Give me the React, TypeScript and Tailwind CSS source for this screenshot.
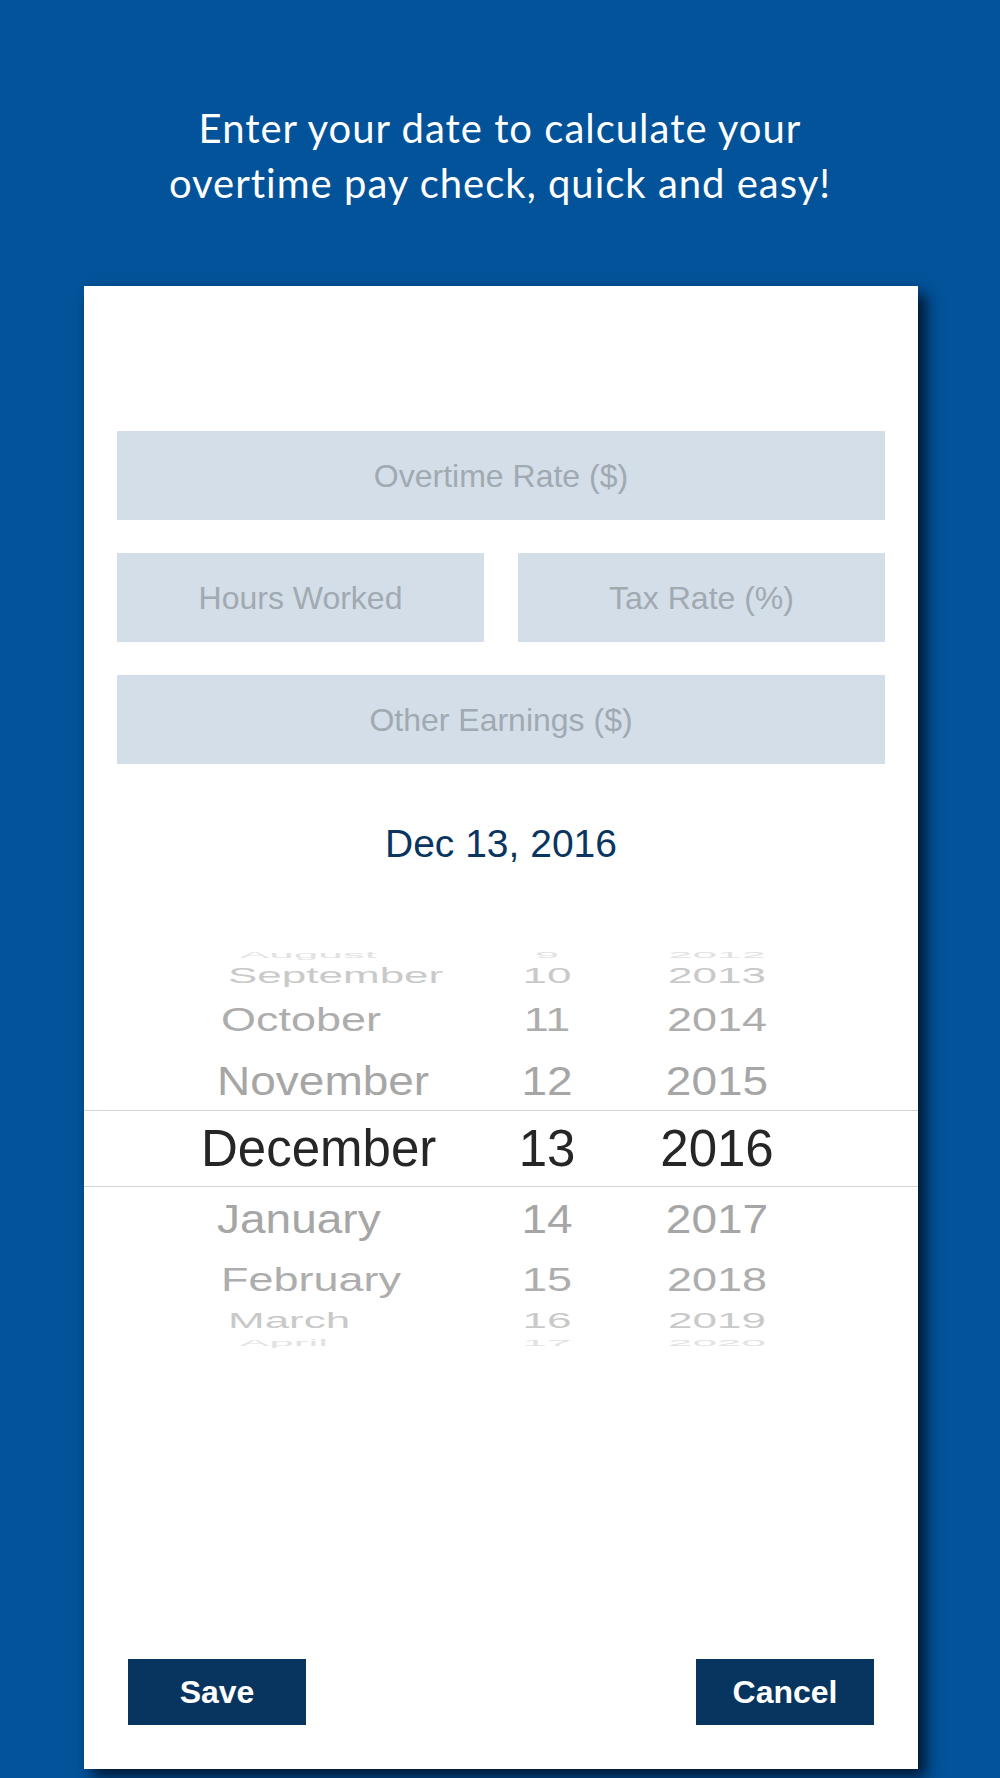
import React from 'react';

interface PickerRow {
  month: string;
  day: string;
  year: string;
  height: string;
  scale: string;
  color: string;
  size: string;
  pad: string;
  selected?: boolean;
}

const rows: PickerRow[] = [
  { month: 'August', day: '9', year: '2012', height: 'h-[21px]', scale: 'scale-y-[0.22]', color: 'text-[#e2e2e2]', size: 'text-[44px]', pad: 'pl-[156px]' },
  { month: 'September', day: '10', year: '2013', height: 'h-[22px]', scale: 'scale-y-[0.48]', color: 'text-[#c9c9c9]', size: 'text-[44px]', pad: 'pl-[144px]' },
  { month: 'October', day: '11', year: '2014', height: 'h-[64px]', scale: 'scale-y-[0.73]', color: 'text-[#adadad]', size: 'text-[45px]', pad: 'pl-[137px]' },
  { month: 'November', day: '12', year: '2015', height: 'h-[59px]', scale: 'scale-y-[0.88]', color: 'text-[#a6a6a6]', size: 'text-[46px]', pad: 'pl-[133px]' },
  { month: 'December', day: '13', year: '2016', height: 'h-[77px]', scale: 'scale-y-100', color: 'text-[#262626]', size: 'text-[51px]', pad: 'pl-[117px]', selected: true },
  { month: 'January', day: '14', year: '2017', height: 'h-[64px]', scale: 'scale-y-[0.9]', color: 'text-[#a6a6a6]', size: 'text-[46px]', pad: 'pl-[133px]' },
  { month: 'February', day: '15', year: '2018', height: 'h-[56px]', scale: 'scale-y-[0.74]', color: 'text-[#adadad]', size: 'text-[45px]', pad: 'pl-[137px]' },
  { month: 'March', day: '16', year: '2019', height: 'h-[28px]', scale: 'scale-y-[0.48]', color: 'text-[#c9c9c9]', size: 'text-[44px]', pad: 'pl-[144px]' },
  { month: 'April', day: '17', year: '2020', height: 'h-[16px]', scale: 'scale-y-[0.22]', color: 'text-[#e2e2e2]', size: 'text-[44px]', pad: 'pl-[156px]' },
];

const sans = "font-['Liberation_Sans',Arial,sans-serif]";

function Field({ label, className = '' }: { label: string; className?: string }) {
  return (
    <div className={`flex h-[89px] shrink-0 items-center justify-center bg-[#d4dee8] text-[32px] text-[#a1a9b1] ${sans} ${className}`}>
      {label}
    </div>
  );
}

export default function App() {
  return (
    <div className="h-[1778px] w-full overflow-hidden bg-[#02539a]">
      {/* heading */}
      <div className="pt-[101px] text-center font-['Lato','Open_Sans',sans-serif] text-[40px] leading-[55px] tracking-[1px] text-white">
        <p>Enter your date to calculate your</p>
        <p>overtime pay check, quick and easy!</p>
      </div>

      {/* card */}
      <div className="ml-[84px] mt-[75px] flex h-[1483px] w-[834px] flex-col bg-white shadow-[8px_8px_14px_rgba(0,12,30,0.85)]">
        <div className="flex flex-col gap-[33px] px-[33px] pt-[145px]">
          <Field label="Overtime Rate ($)" />
          <div className="flex gap-[34px]">
            <Field label="Hours Worked" className="flex-1" />
            <Field label="Tax Rate (%)" className="flex-1" />
          </div>
          <Field label="Other Earnings ($)" />
        </div>

        <p className={`mt-[60px] text-center text-[39px] leading-[39px] text-[#0a3560] ${sans}`}>Dec 13, 2016</p>

        {/* date picker */}
        <div className={`mt-[81px] flex flex-col overflow-hidden ${sans}`}>
          {rows.map((r) => (
            <div
              key={r.month}
              className={`flex items-center overflow-hidden ${r.height} ${r.selected ? 'border-y border-[#d4d4d4]' : ''}`}
            >
              <div className={`flex w-full items-center leading-none ${r.scale} ${r.size} ${r.color}`}>
                <span className={`w-[421px] ${r.pad}`}>{r.month}</span>
                <span className="w-[84px] text-center">{r.day}</span>
                <span className="ml-[48px] w-[160px] text-center">{r.year}</span>
              </div>
            </div>
          ))}
        </div>

        {/* buttons */}
        <div className="mt-auto flex justify-between px-[44px] pb-[44px]">
          <button className={`h-[66px] w-[178px] bg-[#08355f] text-[32px] font-bold text-white ${sans}`}>Save</button>
          <button className={`h-[66px] w-[178px] bg-[#08355f] text-[32px] font-bold text-white ${sans}`}>Cancel</button>
        </div>
      </div>
    </div>
  );
}
